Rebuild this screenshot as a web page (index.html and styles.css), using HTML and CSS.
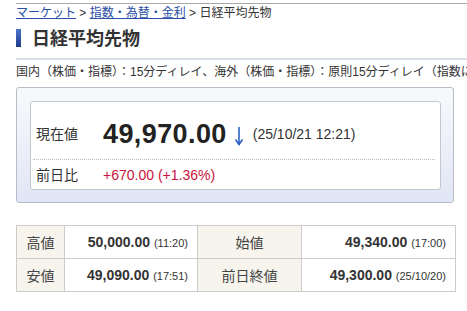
FILE: index.html
```html
<!DOCTYPE html>
<html lang="ja">
<head>
    <meta charset="UTF-8">
    <meta name="viewport" content="width=device-width, initial-scale=1.0">
    <title>日経平均先物</title>
    <link rel="stylesheet" href="styles.css">
</head>
<body>

<div class="page">
    <!-- Breadcrumb -->
    <div class="breadcrumb">
        <a href="#">マーケット</a> &gt; <a href="#">指数・為替・金利</a> &gt; 日経平均先物
    </div>

    <h1 class="title">日経平均先物</h1>

    <p class="notice">国内（株価・指標）：15分ディレイ、海外（株価・指標）：原則15分ディレイ（指数により異なります）</p>

    <!-- Price box -->
    <div class="price-box">
        <div class="price-inner">
            <div class="price-row main-row">
                <span class="label">現在値</span>
                <span class="big-price">49,970.00</span>
                <svg class="arrow" width="10" height="20" viewBox="0 0 10 20">
                    <path d="M5 1 V18 M1.5 13.5 L5 18.5 L8.5 13.5" fill="none" stroke="#2f62c4" stroke-width="1.6"/>
                </svg>
                <span class="stamp">(25/10/21 12:21)</span>
            </div>
            <div class="price-row">
                <span class="label">前日比</span>
                <span class="change">+670.00 (+1.36%)</span>
            </div>
        </div>
    </div>

    <!-- Detail table -->
    <table class="detail">
        <tr>
            <th>高値</th>
            <td><b>50,000.00</b> <small>(11:20)</small></td>
            <th>始値</th>
            <td><b>49,340.00</b> <small>(17:00)</small></td>
        </tr>
        <tr>
            <th>安値</th>
            <td><b>49,090.00</b> <small>(17:51)</small></td>
            <th>前日終値</th>
            <td><b>49,300.00</b> <small>(25/10/20)</small></td>
        </tr>
    </table>
</div>

</body>
</html>
```

FILE: styles.css
```css
/* General Reset */
* {
    margin: 0;
    padding: 0;
    box-sizing: border-box;
}

body {
    background: #fff;
    color: #333;
    font-family: 'Liberation Sans', 'Noto Sans CJK JP', sans-serif;
    overflow: hidden;
}

.page {
    margin-top: 3px;
    margin-left: 16px;
    border-top: 1px solid #a9a9a9;
}

.breadcrumb {
    font-size: 12px;
    line-height: 18px;
    color: #333;
    white-space: nowrap;
}

.breadcrumb a {
    color: #2b4ea6;
    text-decoration: underline;
}

.title {
    margin-top: 6px;
    padding-left: 16px;
    padding-bottom: 8px;
    position: relative;
    font-size: 18px;
    line-height: 22px;
    font-weight: bold;
    color: #333;
    border-bottom: 2px solid #d6dee8;
}

.title::before {
    content: "";
    position: absolute;
    left: 0;
    top: 1px;
    width: 5px;
    height: 18px;
    background: linear-gradient(#4d74cc, #1c3a8a);
}

.notice {
    margin-top: 3px;
    font-size: 12px;
    line-height: 18px;
    white-space: nowrap;
    overflow: hidden;
    color: #333;
}

.price-box {
    margin-top: 6px;
    width: 438px;
    padding: 13px 12px 12px 13px;
    background: linear-gradient(#f8f9fb, #e1e6f6);
    border: 1px solid #b8bcc6;
    border-radius: 3px;
}

.price-inner {
    background: #fff;
    border: 1px solid #c4c7cd;
    border-radius: 3px;
    padding: 0 5px 0 2px;
}

.price-row {
    display: flex;
    align-items: center;
    padding: 5px 0 4px 3px;
    font-size: 14px;
    line-height: 20px;
}

.main-row {
    padding-top: 18px;
    padding-bottom: 11px;
    line-height: 28px;
    border-bottom: 1px dotted #bbb;
}

.label {
    width: 67px;
    flex-shrink: 0;
    color: #333;
}

.big-price {
    font-size: 27px;
    font-weight: bold;
    letter-spacing: 0.4px;
    color: #222;
}

.arrow {
    margin-left: 7px;
    margin-top: 4px;
}

.stamp {
    margin-left: 9px;
    color: #333;
}

.change {
    color: #c8143c;
}

.detail {
    margin-top: 22px;
    width: 440px;
    border-collapse: collapse;
    font-size: 14px;
}

.detail th,
.detail td {
    height: 33px;
    border: 1px solid #ccc;
}

.detail th {
    background: #f6f4ec;
    font-weight: normal;
    color: #444;
    text-align: center;
}

.detail th:nth-child(1) {
    width: 48px;
}

.detail td:nth-child(2) {
    width: 133px;
}

.detail th:nth-child(3) {
    width: 104px;
}

.detail td {
    text-align: right;
    padding-right: 9px;
    color: #333;
}

.detail td b {
    color: #333;
}

.detail small {
    font-size: 11px;
}
```
